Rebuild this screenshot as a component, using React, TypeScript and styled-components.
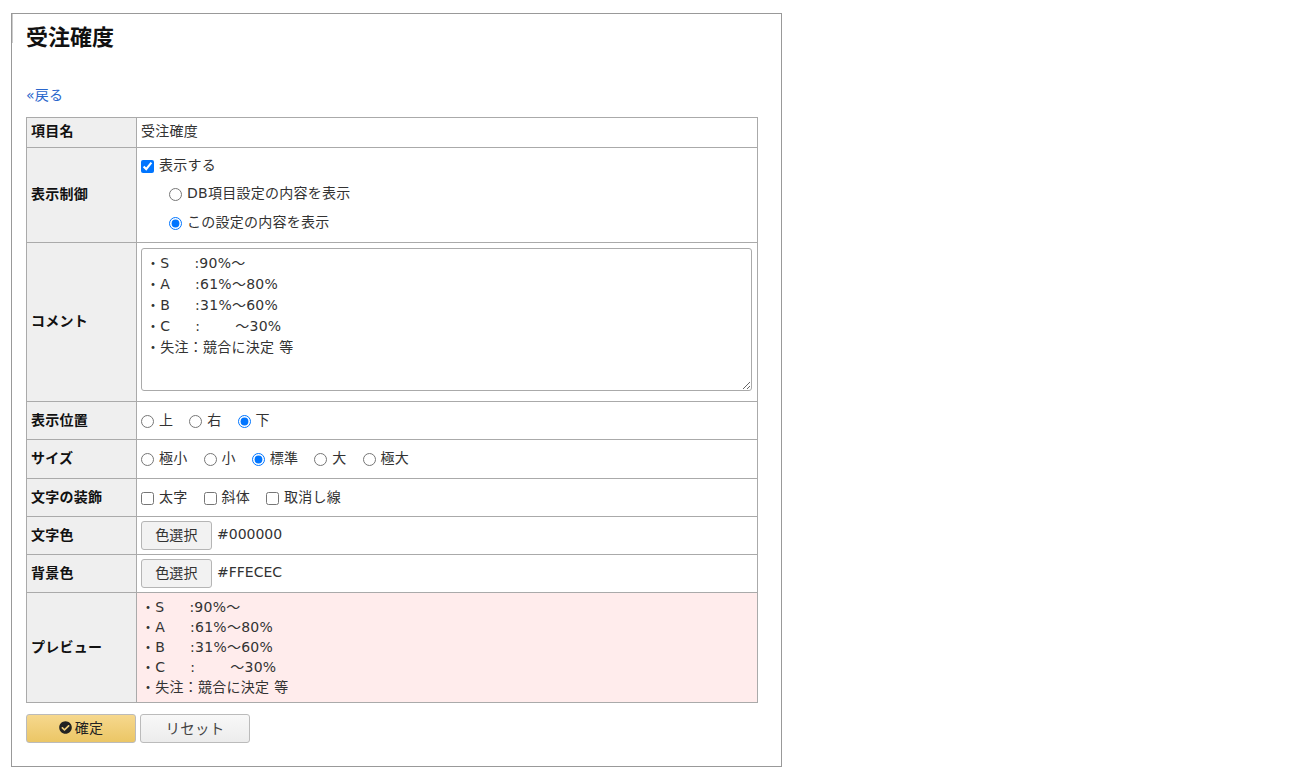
import React from "react";
import styled, { createGlobalStyle } from "styled-components";
import { FaCheckCircle } from "react-icons/fa";

const GlobalStyle = createGlobalStyle`
  html, body {
    margin: 0;
    padding: 0;
    background: #fff;
  }
  body {
    font-family: "DejaVu Sans", "Noto Sans CJK JP", sans-serif;
    font-size: 14px;
    line-height: 20px;
    letter-spacing: 0.25px;
    word-spacing: 0.3px;
    color: #333;
  }
`;

const Page = styled.div`
  padding: 13px 0 0 11px;
`;

const Panel = styled.div`
  box-sizing: border-box;
  width: 771px;
  height: 754px;
  border: 1px solid #999;
  padding: 0 14px;
`;

const Title = styled.h2`
  position: relative;
  margin: 0;
  padding-top: 9px;
  height: 46px;
  box-sizing: border-box;
  font-size: 22px;
  line-height: 30px;
  font-weight: bold;
  color: #111;
  letter-spacing: 0;

  &::before {
    content: "";
    position: absolute;
    left: -14px;
    top: 0;
    width: 1px;
    height: 29px;
    background: #ccc;
  }
`;

const BackLink = styled.a`
  display: block;
  margin-top: 24px;
  height: 33px;
  line-height: 22px;
  color: #2a66cc;
  text-decoration: none;
`;

const FormTable = styled.table`
  border-collapse: collapse;
  width: 732px;
  table-layout: fixed;
`;

const Row = styled.tr<{ $h: number }>`
  height: ${(p) => p.$h}px;
`;

const Label = styled.th<{ $lift?: number }>`
  width: 101px;
  box-sizing: content-box;
  border: 1px solid #aaa;
  background: #efefef;
  padding: 0 4px ${(p) => p.$lift ?? 2}px;
  text-align: left;
  font-size: 14px;
  font-weight: bold;
  color: #111;
`;

const Cell = styled.td<{ $bg?: string }>`
  border: 1px solid #aaa;
  padding: 0 4px;
  background: ${(p) => p.$bg || "#fff"};
`;

const PlainValue = styled.div`
  padding-bottom: 4px;
`;

const Choices = styled.div`
  display: flex;
  align-items: center;
  gap: 16px;
  padding-bottom: 2px;
`;

const Choice = styled.label`
  display: inline-flex;
  align-items: center;
  gap: 5px;
  cursor: pointer;
`;

const Box = styled.input`
  margin: 3px 0 0;
  width: 13px;
  height: 13px;
`;

const Stack = styled.div`
  display: flex;
  flex-direction: column;
  gap: 8.5px;
  padding-bottom: 4px;
`;

const Indented = styled.div`
  display: flex;
  padding-left: 28px;
`;

const Comment = styled.textarea`
  display: block;
  box-sizing: border-box;
  width: 611px;
  height: 143px;
  margin: 5px 0 10px 0;
  padding: 4px;
  border: 1px solid #aaa;
  border-radius: 3px;
  font-family: inherit;
  font-size: 14px;
  line-height: 21px;
  letter-spacing: 0.25px;
  word-spacing: 0.3px;
  color: #333;
  outline: none;
`;

const ColorRow = styled.div`
  display: flex;
  align-items: center;
  gap: 5px;
`;

const HexValue = styled.span`
  padding-bottom: 3px;
  letter-spacing: 0;
`;

const PickButton = styled.button`
  box-sizing: border-box;
  width: 71px;
  height: 29px;
  padding: 0 0 3px;
  border: 1px solid #b5b5b5;
  border-radius: 3px;
  background: #f2f2f2;
  font-family: inherit;
  font-size: 14px;
  letter-spacing: 0.25px;
  color: #333;
`;

const Preview = styled.div`
  padding-bottom: 2px;
  line-height: 20px;
  white-space: pre-wrap;
`;

const Actions = styled.div`
  display: flex;
  gap: 4px;
  margin-top: 11px;
`;

const ActionButton = styled.button<{ $primary?: boolean }>`
  display: inline-flex;
  align-items: center;
  justify-content: center;
  gap: 3px;
  box-sizing: border-box;
  width: 110px;
  height: 29px;
  padding: 0 0 3px;
  border: 1px solid #bbb;
  border-radius: 3px;
  font-family: inherit;
  font-size: ${(p) => (p.$primary ? "14px" : "14.5px")};
  letter-spacing: 0.25px;
  color: ${(p) => (p.$primary ? "#222" : "#444")};
  background: ${(p) =>
    p.$primary
      ? "linear-gradient(to bottom, #f6d88e, #ebc665)"
      : "linear-gradient(to bottom, #f8f8f8, #ececec)"};
`;

const commentText = `・S     :90%～
・A     :61%～80%
・B     :31%～60%
・C     :       ～30%
・失注：競合に決定 等`;

export default function App() {
  return (
    <Page>
      <GlobalStyle />
      <Panel>
        <Title>受注確度</Title>
        <BackLink href="#">«戻る</BackLink>
        <FormTable>
          <tbody>
            <Row $h={30}>
              <Label $lift={4}>項目名</Label>
              <Cell>
                <PlainValue>受注確度</PlainValue>
              </Cell>
            </Row>
            <Row $h={95}>
              <Label>表示制御</Label>
              <Cell>
                <Stack>
                  <Choice>
                    <Box type="checkbox" defaultChecked />
                    表示する
                  </Choice>
                  <Indented>
                    <Choice>
                      <Box type="radio" name="mode" />
                      DB項目設定の内容を表示
                    </Choice>
                  </Indented>
                  <Indented>
                    <Choice>
                      <Box type="radio" name="mode" defaultChecked />
                      この設定の内容を表示
                    </Choice>
                  </Indented>
                </Stack>
              </Cell>
            </Row>
            <Row $h={159}>
              <Label>コメント</Label>
              <Cell>
                <Comment defaultValue={commentText} />
              </Cell>
            </Row>
            <Row $h={38}>
              <Label>表示位置</Label>
              <Cell>
                <Choices>
                  {["上", "右", "下"].map((t) => (
                    <Choice key={t}>
                      <Box type="radio" name="pos" defaultChecked={t === "下"} />
                      {t}
                    </Choice>
                  ))}
                </Choices>
              </Cell>
            </Row>
            <Row $h={39}>
              <Label>サイズ</Label>
              <Cell>
                <Choices>
                  {["極小", "小", "標準", "大", "極大"].map((t) => (
                    <Choice key={t}>
                      <Box type="radio" name="size" defaultChecked={t === "標準"} />
                      {t}
                    </Choice>
                  ))}
                </Choices>
              </Cell>
            </Row>
            <Row $h={38}>
              <Label>文字の装飾</Label>
              <Cell>
                <Choices>
                  {["太字", "斜体", "取消し線"].map((t) => (
                    <Choice key={t}>
                      <Box type="checkbox" />
                      {t}
                    </Choice>
                  ))}
                </Choices>
              </Cell>
            </Row>
            <Row $h={38}>
              <Label>文字色</Label>
              <Cell>
                <ColorRow>
                  <PickButton>色選択</PickButton>
                  <HexValue>#000000</HexValue>
                </ColorRow>
              </Cell>
            </Row>
            <Row $h={38}>
              <Label>背景色</Label>
              <Cell>
                <ColorRow>
                  <PickButton>色選択</PickButton>
                  <HexValue>#FFECEC</HexValue>
                </ColorRow>
              </Cell>
            </Row>
            <Row $h={110}>
              <Label>プレビュー</Label>
              <Cell $bg="#ffecec">
                <Preview>{commentText}</Preview>
              </Cell>
            </Row>
          </tbody>
        </FormTable>
        <Actions>
          <ActionButton $primary>
            <FaCheckCircle size={13} />
            確定
          </ActionButton>
          <ActionButton>リセット</ActionButton>
        </Actions>
      </Panel>
    </Page>
  );
}
